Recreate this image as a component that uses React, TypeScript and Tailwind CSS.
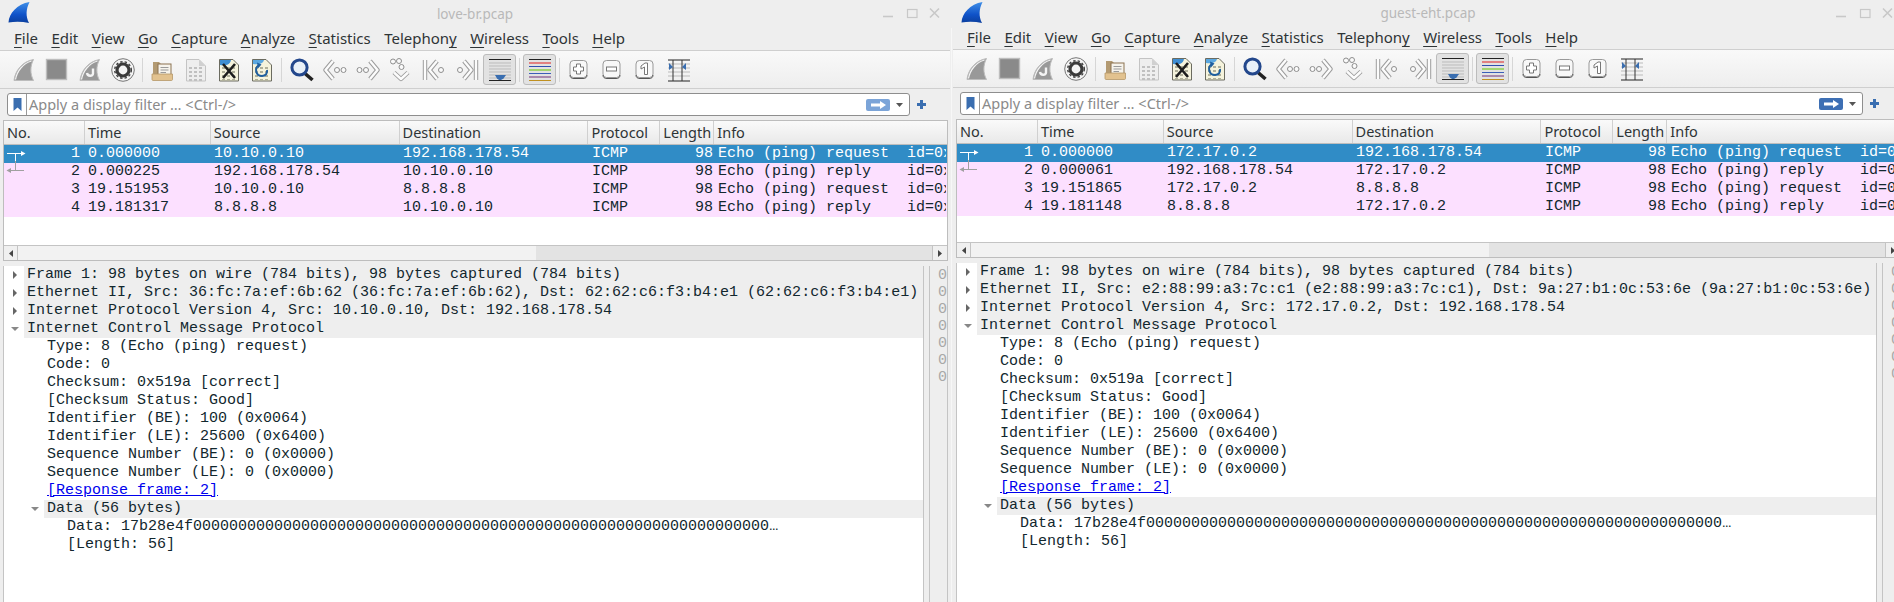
import type { ReactNode } from 'react';

interface Capture {
  title: string;
  applyColor: string;
  menuTop: string;
  listHeight: string;
  packets: string[][];
  src: string;
  srcMac: string;
  dstMac: string;
}

const ui = { fontFamily: '"Noto Sans", sans-serif' };
const mono = { fontFamily: '"Liberation Mono", monospace' };

const menuItems = [
  ['F', 'ile'],
  ['E', 'dit'],
  ['V', 'iew'],
  ['G', 'o'],
  ['C', 'apture'],
  ['A', 'nalyze'],
  ['S', 'tatistics'],
  ['', 'Telephon', 'y'],
  ['W', 'ireless'],
  ['T', 'ools'],
  ['H', 'elp'],
];

const columns = [
  { name: 'No.', width: 'w-[81px]' },
  { name: 'Time', width: 'w-[126px]' },
  { name: 'Source', width: 'w-[189px]' },
  { name: 'Destination', width: 'w-[189px]' },
  { name: 'Protocol', width: 'w-[72px]' },
  { name: 'Length', width: 'w-[54px]' },
  { name: 'Info', width: 'w-[233px]' },
];

const ECHO_REQ = 'Echo (ping) request  id=0x';
const ECHO_REP = 'Echo (ping) reply    id=0x';

const FIN = 'M2 22.5C3 13 10 3.5 21.5 1.5C18 8 18 16 21.5 22.5Z';

const Fin = ({ reload }: { reload?: boolean }) => (
  <svg width="24" height="24" viewBox="0 0 24 24">
    <path d={FIN} fill="#999999" stroke="#bcbcbc" strokeWidth="1" />
    <path d="M3.5 21.5C5 13 11 5.5 19.5 3" fill="none" stroke="#f4f4f4" strokeWidth="1.2" />
    {reload && (
      <path d="M15 10.5V15.5C15 18.5 9.5 18.5 9 15" fill="none" stroke="#f4f4f4" strokeWidth="2.4" />
    )}
  </svg>
);

const Stop = () => (
  <svg width="24" height="24" viewBox="0 0 24 24">
    <rect x="1.5" y="1.5" width="20" height="20" fill="#8a8a8a" stroke="#bdbdbd" strokeWidth="1.4" />
  </svg>
);

const Gear = () => (
  <svg width="24" height="24" viewBox="0 0 24 24">
    <circle cx="12" cy="12" r="11.3" fill="#f4f4f4" stroke="#777" strokeWidth="1" />
    <circle cx="12" cy="12" r="6" fill="none" stroke="#3a3a3a" strokeWidth="3.2" />
    <circle cx="12" cy="12" r="8.3" fill="none" stroke="#3a3a3a" strokeWidth="1.4" strokeDasharray="2.4 2.1" />
  </svg>
);

const Folder = () => (
  <svg width="24" height="24" viewBox="0 0 24 24">
    <path d="M2 4H8L10 6H19V21H2Z" fill="#b39a72" />
    <rect x="7" y="6" width="13" height="11" fill="#f6f3ec" stroke="#8b7350" strokeWidth="1" />
    <path d="M9.5 9.5H17.5M9.5 12H17.5M9.5 14.5H15" stroke="#9a9a9a" strokeWidth="1" />
    <path d="M1 16H21.5V21.5C21.5 22 21 22.5 20.5 22.5H2C1.5 22.5 1 22 1 21.5Z" fill="#e2c28f" stroke="#b59868" strokeWidth="0.8" />
  </svg>
);

const BinaryRows = ({ color }: { color: string }) => (
  <g fill={color}>
    {[9, 13, 17, 21].map((y) => (
      <path key={y} d={`M5 ${y}h3v2h-3zM10 ${y}h3v2h-3zM15 ${y}h3v2h-3z`} />
    ))}
  </g>
);

const FileIcon = () => (
  <svg width="24" height="24" viewBox="0 0 24 24">
    <path d="M2.5 1.5H15L21.5 8V23H2.5Z" fill="#eeeeee" stroke="#c4c4c4" />
    <path d="M15 1.5V8H21.5Z" fill="#d0d0d0" />
    <BinaryRows color="#c0c0c0" />
  </svg>
);

const CloseFile = () => (
  <svg width="24" height="24" viewBox="0 0 24 24">
    <path d="M2.5 1.5H16L21.5 7V23H2.5Z" fill="#f5f3dc" stroke="#6b6b60" />
    <path d="M3 2H14C13 7 8 8 3 7Z" fill="#3f8ed2" />
    <BinaryRows color="#b0b09a" />
    <path d="M6 6L18 20M18 6L6 20" stroke="#1d1d1d" strokeWidth="2.6" />
  </svg>
);

const ReloadFile = () => (
  <svg width="24" height="24" viewBox="0 0 24 24">
    <path d="M2.5 1.5H16L21.5 7V23H2.5Z" fill="#f5f3dc" stroke="#6b6b60" />
    <path d="M3 2H14C13 6 8 7 3 6Z" fill="#5aa7e0" />
    <BinaryRows color="#b0b09a" />
    <path d="M8.5 7.5C4.5 10 5.5 18 12 18C16 18 17.5 15 17 12" fill="none" stroke="#1f5f9e" strokeWidth="2" />
    <path d="M7 4.5L11.5 6.5L8 10.5Z" fill="#1f5f9e" />
  </svg>
);

const Find = () => (
  <svg width="24" height="24" viewBox="0 0 24 24">
    <path d="M15 15.5L22.5 22" stroke="#222" strokeWidth="3.6" />
    <circle cx="9.5" cy="9.5" r="7.6" fill="#e9f0f8" stroke="#23478c" strokeWidth="3" />
  </svg>
);

// Hollow chevrons: thick grey stroke under a thinner white one
const Hollow = ({ d }: { d: string }) => (
  <>
    <path d={d} fill="none" stroke="#9c9c9c" strokeWidth="4.4" strokeLinejoin="round" />
    <path d={d} fill="none" stroke="#fcfcfc" strokeWidth="2.4" strokeLinejoin="round" />
  </>
);

const Dot = ({ x, y }: { x: number; y: number }) => (
  <circle cx={x} cy={y} r="2.5" fill="#fafafa" stroke="#8e8e8e" strokeWidth="1" />
);

const GoPrev = () => (
  <svg width="24" height="24" viewBox="0 0 24 24">
    <Hollow d="M10 3L2.5 12L10 21" />
    <Dot x={14} y={12} />
    <Dot x={20.5} y={12} />
  </svg>
);

const GoNext = () => (
  <svg width="24" height="24" viewBox="0 0 24 24">
    <Hollow d="M14 3L21.5 12L14 21" />
    <Dot x={3.5} y={12} />
    <Dot x={10} y={12} />
  </svg>
);

const GoTo = () => (
  <svg width="24" height="24" viewBox="0 0 24 24">
    <Hollow d="M5 14.5L12 21L19 14.5" />
    <Dot x={4} y={3.5} />
    <Dot x={10} y={3} />
    <Dot x={12.5} y={9} />
  </svg>
);

const GoFirst = () => (
  <svg width="24" height="24" viewBox="0 0 24 24">
    <Hollow d="M3 2V22" />
    <Hollow d="M15 3L7.5 12L15 21" />
    <Dot x={19} y={12} />
  </svg>
);

const GoLast = () => (
  <svg width="24" height="24" viewBox="0 0 24 24">
    <Hollow d="M21 2V22" />
    <Hollow d="M9 3L16.5 12L9 21" />
    <Dot x={5} y={12} />
  </svg>
);

const AutoScroll = () => (
  <svg width="24" height="24" viewBox="0 0 24 24">
    <path d="M1 1.5H23M1 22.5H23" stroke="#222" strokeWidth="1" />
    <path d="M1 5H23M1 8H23M1 11H23M1 14H23M1 17H23M1 20H23" stroke="#bbb" strokeWidth="1" />
    <path d="M7 17H18L15.5 20.5L13 22H11L9 20.5Z" fill="#3a6eb0" />
  </svg>
);

const Colorize = () => (
  <svg width="24" height="24" viewBox="0 0 24 24">
    <path d="M1 1.5H23" stroke="#222" />
    <path d="M1 5H23" stroke="#e02020" />
    <path d="M1 8.5H23" stroke="#3150b0" />
    <path d="M1 12H23" stroke="#62c800" />
    <path d="M1 15.5H23" stroke="#3a5fb8" />
    <path d="M1 19H23" stroke="#70307a" />
    <path d="M1 22.5H23" stroke="#c09020" />
  </svg>
);

const ZoomBox = ({ children }: { children: ReactNode }) => (
  <svg width="24" height="24" viewBox="0 0 24 24">
    <rect x="2" y="2.5" width="17" height="17" rx="3.5" fill="#f8f8f8" stroke="#999" />
    <path d="M2 17C2 19.5 3.5 20.5 6 20.5H15C17.5 20.5 19 19.5 19 17" fill="none" stroke="#555" strokeWidth="1" />
    {children}
  </svg>
);

const ResizeColumns = () => (
  <svg width="24" height="24" viewBox="0 0 24 24">
    <path d="M1 2H23M1 23H23" stroke="#222" strokeWidth="1" />
    <path d="M1 6H23M1 10H23M1 14H23M1 18H23" stroke="#bbb" strokeWidth="1" />
    <path d="M6 2V23M15 2V23" stroke="#333" strokeWidth="1" />
    <path d="M2 5L6 9L2 12ZM19 5L15 9L19 12Z" fill="#3a6eb0" />
  </svg>
);

const toolbar: (ReactNode | 'sep')[] = [
  <Fin />,
  <Stop />,
  <Fin reload />,
  <Gear />,
  'sep',
  <Folder />,
  <FileIcon />,
  <CloseFile />,
  <ReloadFile />,
  'sep',
  <Find />,
  <GoPrev />,
  <GoNext />,
  <GoTo />,
  <GoFirst />,
  <GoLast />,
];

const ToolSep = () => (
  <div className="flex w-[7px] justify-center">
    <div className="my-[7px] h-[24px] w-px bg-[#d6d6d6]" />
  </div>
);

const ToggleButton = ({ children }: { children: ReactNode }) => (
  <div className="flex h-[31px] w-[33px] items-center justify-center rounded-[3px] border border-[#bcbcbc] bg-[#e2e2e2]">
    {children}
  </div>
);

const Toolbar = () => (
  <div className="flex h-[39px] items-center border-y border-[#cfcfcf] bg-gradient-to-b from-[#f9f9f9] to-[#eeeeee] pl-[7px]">
    {toolbar.map((item, i) =>
      item === 'sep' ? (
        <ToolSep key={i} />
      ) : (
        <div key={i} className="flex w-[33px] justify-center">
          {item}
        </div>
      )
    )}
    <ToggleButton>
      <AutoScroll />
    </ToggleButton>
    <ToolSep />
    <ToggleButton>
      <Colorize />
    </ToggleButton>
    <ToolSep />
    <div className="flex w-[33px] justify-center">
      <ZoomBox>
        <path d="M8.5 6H12.5V9H15.5V13H12.5V16H8.5V13H5.5V9H8.5Z" fill="#fff" stroke="#777" />
      </ZoomBox>
    </div>
    <div className="flex w-[33px] justify-center">
      <ZoomBox>
        <rect x="5.5" y="9" width="10" height="4" fill="#fff" stroke="#777" />
      </ZoomBox>
    </div>
    <div className="flex w-[33px] justify-center">
      <ZoomBox>
        <path d="M7 8L11 5H13.5V16.5H10.5V9L7 11Z" fill="#fff" stroke="#777" />
      </ZoomBox>
    </div>
    <div className="flex w-[33px] justify-center">
      <ResizeColumns />
    </div>
  </div>
);

const FilterBar = ({ applyColor }: { applyColor: string }) => (
  <div className="flex h-[31px] items-center pl-[7px]">
    <div className="flex h-[23px] w-[903px] items-center rounded-[3px] border border-[#8e8e8e] bg-white">
      <div className="flex h-full w-[19px] items-center justify-center border-r border-[#9a9a9a]">
        <svg width="9" height="13" viewBox="0 0 9 13">
          <path d="M0.5 0H8.5V13L4.5 9.5L0.5 13Z" fill="#3a6eb0" />
        </svg>
      </div>
      <span className="flex-1 pl-[2px] text-[14.5px] text-[#8a8a8a]" style={ui}>
        Apply a display filter … &lt;Ctrl-/&gt;
      </span>
      <svg width="24" height="12" viewBox="0 0 24 12">
        <rect width="24" height="12" rx="2" fill={applyColor} />
        <path d="M5 4.5H14V2L20 6L14 10V7.5H5Z" fill="#fff" />
      </svg>
      <svg className="mx-[6px]" width="7" height="4" viewBox="0 0 7 4">
        <path d="M0 0H7L3.5 4Z" fill="#555" />
      </svg>
    </div>
    <svg className="ml-[7px]" width="9" height="9" viewBox="0 0 9 9">
      <path d="M3 0H6V3H9V6H6V9H3V6H0V3H3Z" fill="#3a6eb0" />
    </svg>
  </div>
);

const PacketList = ({ packets, height }: { packets: string[][]; height: string }) => (
  <div className={`ml-[3px] flex w-[945px] shrink-0 flex-col border border-[#bdbdbd] bg-white ${height}`}>
    <div className="flex h-[24px] shrink-0 border-b border-[#bdbdbd] bg-gradient-to-b from-[#fafafa] to-[#e9e9e9] text-[14.5px] text-[#2e3436]" style={ui}>
      {columns.map((col, i) => (
        <div key={col.name} className={`flex items-center pl-[3px] pt-[1px] ${col.width} ${i < 6 ? 'border-r border-[#d0d0d0]' : ''}`}>
          {col.name}
        </div>
      ))}
    </div>
    <div className="flex-1 overflow-hidden">
      {packets.map((p, i) => (
        <div
          key={p[0]}
          className={`flex h-[18px] items-center whitespace-pre text-[15px] ${i === 0 ? 'bg-[#308cc6] text-white' : 'bg-[#fce0ff] text-[#12272e]'}`}
          style={mono}
        >
          <div className="relative w-[81px] pr-[5px] text-right">
            {i === 0 && (
              <svg className="absolute left-[2px] top-[0px]" width="20" height="18" viewBox="0 0 20 18">
                <path d="M1 10.5H16M9.5 10.5V18" stroke="#fff" />
                <path d="M15 8L19.5 10.5L15 13Z" fill="#fff" />
              </svg>
            )}
            {i === 1 && (
              <svg className="absolute left-[2px] top-[0px]" width="20" height="18" viewBox="0 0 20 18">
                <path d="M9.5 0V9.5M4 9.5H18" stroke="#a0a0a0" />
                <path d="M5 7L0.5 9.5L5 12Z" fill="#a0a0a0" />
              </svg>
            )}
            {p[0]}
          </div>
          <div className="w-[126px] overflow-hidden pl-[3px]">{p[1]}</div>
          <div className="w-[189px] overflow-hidden pl-[3px]">{p[2]}</div>
          <div className="w-[189px] overflow-hidden pl-[3px]">{p[3]}</div>
          <div className="w-[72px] overflow-hidden pl-[3px]">ICMP</div>
          <div className="w-[54px] overflow-hidden pr-[2px] text-right">98</div>
          <div className="w-[231px] overflow-hidden pl-[3px]">{i % 2 === 0 ? ECHO_REQ : ECHO_REP}</div>
        </div>
      ))}
    </div>
    <div className="flex h-[15px] shrink-0 border-t border-[#c4c4c4] bg-[#e3e3e3]">
      <div className="flex w-[14px] items-center justify-center border-r border-[#c4c4c4] bg-[#f0f0f0]">
        <svg width="4" height="7" viewBox="0 0 4 7">
          <path d="M4 0V7L0 3.5Z" fill="#444" />
        </svg>
      </div>
      <div className="w-[518px] bg-[#f2f2f2]" />
      <div className="flex-1" />
      <div className="flex w-[15px] items-center justify-center border-l border-[#c4c4c4] bg-[#f0f0f0]">
        <svg width="4" height="7" viewBox="0 0 4 7">
          <path d="M0 0V7L4 3.5Z" fill="#444" />
        </svg>
      </div>
    </div>
  </div>
);

const Expander = ({ open, left }: { open?: boolean; left: string }) => (
  <svg className={`absolute top-[5px] ${left}`} width="8" height="8" viewBox="0 0 8 8">
    {open ? <path d="M0 2H8L4 6Z" fill="#888" /> : <path d="M2 0V8L6 4Z" fill="#666" />}
  </svg>
);

const TreeTop = ({ children, open }: { children: ReactNode; open?: boolean }) => (
  <div className="relative h-[18px] pl-[20px]">
    <Expander open={open} left="left-[7px]" />
    <div className="h-full bg-[#eeeeee] pl-[3px]">{children}</div>
  </div>
);

const TreeChild = ({ children }: { children: ReactNode }) => (
  <div className="h-[18px] pl-[43px]">{children}</div>
);

const HexPane = () => (
  <div className="ml-[5px] w-[19px] overflow-hidden border-x border-[#c4c4c4] bg-[#eeeeee] pl-[8px] pt-[1px] text-[15px] leading-[17px] text-[#a8a8a8]" style={mono}>
    {Array.from({ length: 7 }, (_, i) => (
      <div key={i}>0</div>
    ))}
  </div>
);

const PacketDetails = ({ src, srcMac, dstMac }: { src: string; srcMac: string; dstMac: string }) => (
  <div className="ml-[3px] flex min-h-0 w-[945px] flex-1">
    <div className="flex-1 overflow-hidden whitespace-pre border-x border-[#c4c4c4] bg-white text-[15px] leading-[18px] text-[#12272e]" style={mono}>
      <TreeTop>Frame 1: 98 bytes on wire (784 bits), 98 bytes captured (784 bits)</TreeTop>
      <TreeTop>{`Ethernet II, Src: ${srcMac} (${srcMac}), Dst: ${dstMac} (${dstMac})`}</TreeTop>
      <TreeTop>{`Internet Protocol Version 4, Src: ${src}, Dst: 192.168.178.54`}</TreeTop>
      <TreeTop open>Internet Control Message Protocol</TreeTop>
      <TreeChild>Type: 8 (Echo (ping) request)</TreeChild>
      <TreeChild>Code: 0</TreeChild>
      <TreeChild>Checksum: 0x519a [correct]</TreeChild>
      <TreeChild>[Checksum Status: Good]</TreeChild>
      <TreeChild>Identifier (BE): 100 (0x0064)</TreeChild>
      <TreeChild>Identifier (LE): 25600 (0x6400)</TreeChild>
      <TreeChild>Sequence Number (BE): 0 (0x0000)</TreeChild>
      <TreeChild>Sequence Number (LE): 0 (0x0000)</TreeChild>
      <TreeChild>
        <span className="text-[#0000ee] underline">[Response frame: 2]</span>
      </TreeChild>
      <div className="relative h-[18px] pl-[40px]">
        <Expander open left="left-[27px]" />
        <div className="h-full bg-[#eeeeee] pl-[3px]">Data (56 bytes)</div>
      </div>
      <div className="h-[18px] pl-[63px]">Data: 17b28e4f{'0'.repeat(64)}…</div>
      <div className="h-[18px] pl-[63px]">[Length: 56]</div>
    </div>
    <HexPane />
  </div>
);

const WiresharkWindow = ({ title, applyColor, menuTop, listHeight, packets, src, srcMac, dstMac }: Capture) => (
  <div className="flex h-full w-[950px] shrink-0 flex-col bg-[#eeeeee]">
    <div className={`relative flex shrink-0 items-center justify-center ${menuTop}`}>
      <svg className="absolute left-[8px] top-[1px]" width="23" height="23" viewBox="0 0 23 23">
        <defs>
          <linearGradient id="sharkFill" x1="0" y1="0" x2="0" y2="1">
            <stop offset="0" stopColor="#3f8fe8" />
            <stop offset="0.6" stopColor="#0f52c8" />
            <stop offset="1" stopColor="#0b3f9e" />
          </linearGradient>
        </defs>
        <path d="M0.5 21.5C1 12.5 9 3 21.5 1C18 8 17.5 15 21 22C14 20.5 7 20.5 0.5 21.5Z" fill="url(#sharkFill)" />
      </svg>
      <span className="text-[13.5px] text-[#b9b9b9]" style={ui}>{title}</span>
      <svg className="absolute left-[883px] top-[7px]" width="58" height="12" viewBox="0 0 58 12">
        <path d="M0 9.5H10" stroke="#c8c8c8" strokeWidth="1.6" />
        <rect x="24.5" y="2.5" width="9.5" height="8" fill="none" stroke="#c8c8c8" strokeWidth="1.2" />
        <path d="M47 1.5L56 10.5M56 1.5L47 10.5" stroke="#c8c8c8" strokeWidth="1.6" />
      </svg>
    </div>
    <nav className="flex h-[22px] shrink-0 items-center gap-[13.4px] pb-[1px] pl-[14px] text-[15px] text-[#2e3436]" style={ui}>
      {menuItems.map(([key, rest, tail]) => (
        <span key={key + rest}>
          {key && <span className="underline underline-offset-[3px]">{key}</span>}
          {rest}
          {tail && <span className="underline underline-offset-[3px]">{tail}</span>}
        </span>
      ))}
    </nav>
    <Toolbar />
    <FilterBar applyColor={applyColor} />
    <PacketList packets={packets} height={listHeight} />
    <div className="h-[5px] shrink-0" />
    <PacketDetails src={src} srcMac={srcMac} dstMac={dstMac} />
  </div>
);

export default function App() {
  return (
    <div className="flex h-[602px] w-[1894px] overflow-hidden bg-[#eeeeee]">
      <WiresharkWindow
        title="love-br.pcap"
        applyColor="#7ba4d8"
        menuTop="h-[28px]"
        listHeight="h-[141px]"
        src="10.10.0.10"
        srcMac="36:fc:7a:ef:6b:62"
        dstMac="62:62:c6:f3:b4:e1"
        packets={[
          ['1', '0.000000', '10.10.0.10', '192.168.178.54'],
          ['2', '0.000225', '192.168.178.54', '10.10.0.10'],
          ['3', '19.151953', '10.10.0.10', '8.8.8.8'],
          ['4', '19.181317', '8.8.8.8', '10.10.0.10'],
        ]}
      />
      <div className="mt-[28px] w-[3px] shrink-0 px-px">
        <div className="h-full w-px bg-[#f7f7f7]" />
      </div>
      <WiresharkWindow
        title="guest-eht.pcap"
        applyColor="#3d6fb4"
        menuTop="h-[27px]"
        listHeight="h-[139px]"
        src="172.17.0.2"
        srcMac="e2:88:99:a3:7c:c1"
        dstMac="9a:27:b1:0c:53:6e"
        packets={[
          ['1', '0.000000', '172.17.0.2', '192.168.178.54'],
          ['2', '0.000061', '192.168.178.54', '172.17.0.2'],
          ['3', '19.151865', '172.17.0.2', '8.8.8.8'],
          ['4', '19.181148', '8.8.8.8', '172.17.0.2'],
        ]}
      />
    </div>
  );
}
